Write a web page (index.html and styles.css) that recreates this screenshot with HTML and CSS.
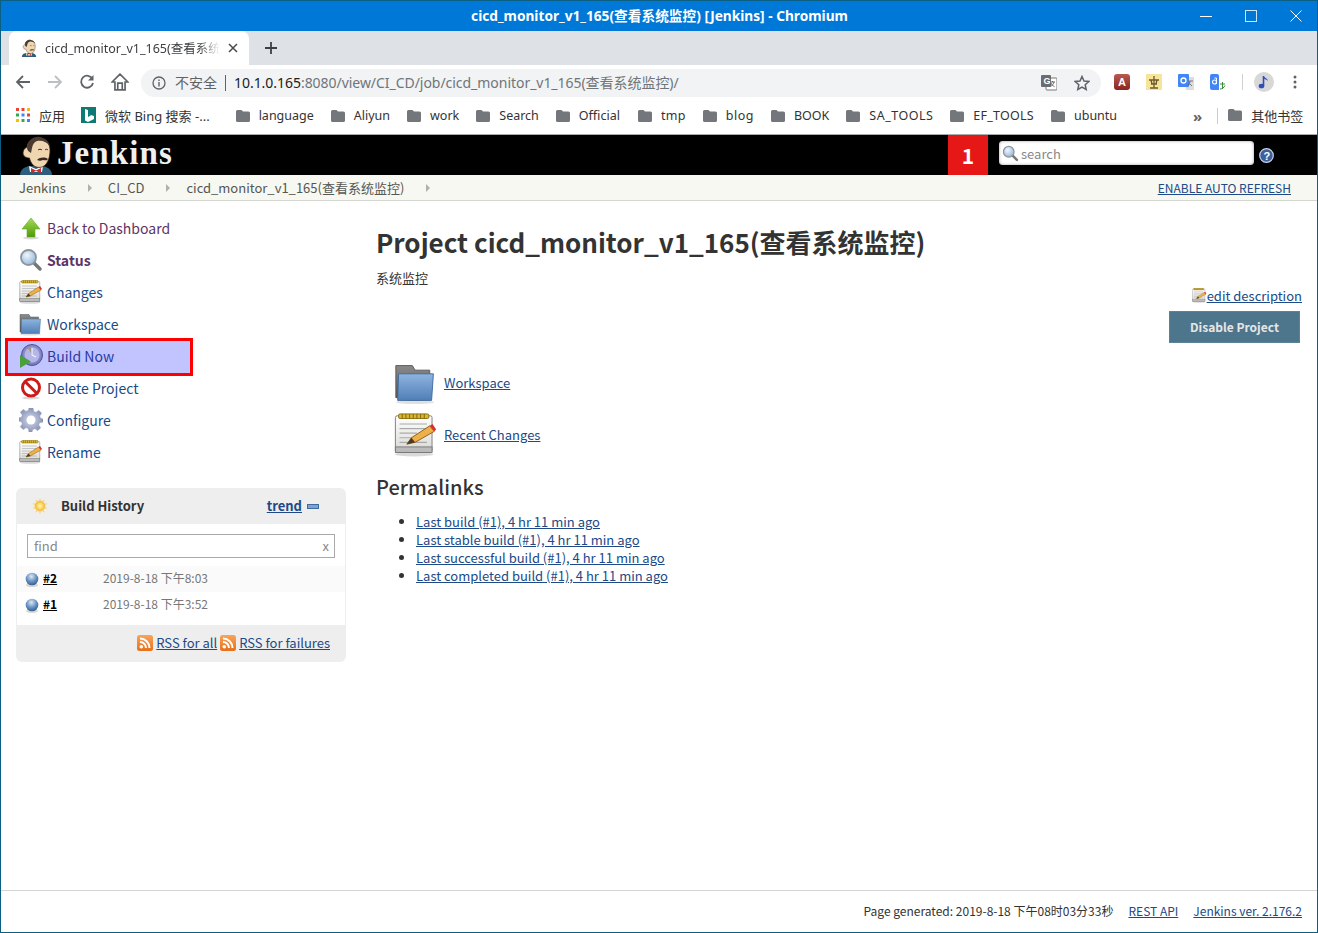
FILE: index.html
```html
<!DOCTYPE html>
<html>
	<head>
		<meta charset="UTF-8">
		<title>cicd_monitor_v1_165(查看系统监控) [Jenkins]</title>
		<link rel="stylesheet" href="styles.css">
	</head>
	<body>
		<svg class="defs" width="0" height="0">
			<defs>
				<linearGradient id="gFolder" x1="0" y1="0" x2="0" y2="1"><stop offset="0" stop-color="#8fb4de"/><stop offset="1" stop-color="#4f7fb8"/></linearGradient>
				<linearGradient id="gGrey" x1="0" y1="0" x2="0" y2="1"><stop offset="0" stop-color="#8a8a8a"/><stop offset="1" stop-color="#555"/></linearGradient>
				<linearGradient id="gPaper" x1="0" y1="0" x2="0" y2="1"><stop offset="0" stop-color="#fff"/><stop offset="1" stop-color="#d8d8d4"/></linearGradient>
				<linearGradient id="gArrow" x1="0" y1="0" x2="0" y2="1"><stop offset="0" stop-color="#a5dc5a"/><stop offset="1" stop-color="#4e9a06"/></linearGradient>
				<linearGradient id="gRss" x1="0" y1="0" x2="0" y2="1"><stop offset="0" stop-color="#f9a45a"/><stop offset="1" stop-color="#e8701a"/></linearGradient>
				<linearGradient id="gExtA" x1="0" y1="0" x2="0" y2="1"><stop offset="0" stop-color="#b85a52"/><stop offset="1" stop-color="#8a2420"/></linearGradient>
				<radialGradient id="gBall" cx=".45" cy=".3" r=".75"><stop offset="0" stop-color="#dfe8f3"/><stop offset=".5" stop-color="#6f97c8"/><stop offset="1" stop-color="#2b5688"/></radialGradient>
				<radialGradient id="gLens" cx=".4" cy=".35" r=".7"><stop offset="0" stop-color="#f0f6fc"/><stop offset="1" stop-color="#93b6dc"/></radialGradient>
				<radialGradient id="gSun" cx=".5" cy=".5" r=".5"><stop offset="0" stop-color="#fff6a8"/><stop offset="1" stop-color="#f9c440"/></radialGradient>
				<radialGradient id="gClock" cx=".5" cy=".45" r=".6"><stop offset="0" stop-color="#b9bbec"/><stop offset="1" stop-color="#6a6fb5"/></radialGradient>
				<radialGradient id="gGear" cx=".5" cy=".5" r=".5"><stop offset="0" stop-color="#d4d9ea"/><stop offset="1" stop-color="#8a95ba"/></radialGradient>

				<symbol id="i-folder" viewBox="0 0 48 48">
					<path d="M2 5h18l3 5h16v30H2z" fill="url(#gGrey)" stroke="#555"/>
					<path d="M5 14h38l-2 29H4z" fill="url(#gFolder)" stroke="#3c6a9e"/>
					<ellipse cx="23" cy="45" rx="21" ry="2" fill="#000" opacity=".12"/>
				</symbol>
				<symbol id="i-note" viewBox="0 0 48 48">
					<ellipse cx="22" cy="45" rx="21" ry="2.5" fill="#000" opacity=".15"/>
					<rect x="1.500" y="3" width="40" height="40" rx="2" fill="url(#gPaper)" stroke="#777"/>
					<rect x="1.500" y="37" width="40" height="6" fill="#bbb" stroke="#777"/>
					<rect x="5" y="1" width="33" height="5" rx="1.500" fill="#d8b62f" stroke="#8a6d0c"/>
					<path d="M9 1v5M13 1v5M17 1v5M21 1v5M25 1v5M29 1v5M33 1v5" stroke="#7d620a"/>
					<path d="M6 12h30M6 17h30M6 22h19M6 27h15M6 32h30" stroke="#aaa" stroke-width="1.200"/>
					<path d="M14 34l5-7 20-13 5 6-21 12z" fill="#edb04a" stroke="#8a5a12"/>
					<path d="M39 14l5 6 2-2-4-6z" fill="#d9302c"/>
					<path d="M14 34l5-7 4 5z" fill="#4a3a22"/>
				</symbol>
				<symbol id="i-up" viewBox="0 0 24 24">
					<ellipse cx="12" cy="22" rx="8" ry="1.500" fill="#000" opacity=".15"/>
					<path d="M12 2L21 13H16V21H8V13H3z" fill="url(#gArrow)" stroke="#6aa82a" stroke-width=".6"/>
				</symbol>
				<symbol id="i-search" viewBox="0 0 24 24">
					<path d="M14 14l7 7" stroke="#777" stroke-width="3.500" stroke-linecap="round"/>
					<circle cx="9.500" cy="9.500" r="7.500" fill="url(#gLens)" stroke="#8d959c" stroke-width="1.800"/>
				</symbol>
				<symbol id="i-clock" viewBox="0 0 24 24">
					<circle cx="13" cy="11" r="10.500" fill="url(#gClock)" stroke="#4e5296"/>
					<circle cx="13" cy="11" r="7.500" fill="#b4b6ea"/>
					<path d="M13 11L9 4a8 8 0 0 1 4-.5z" fill="#a8937a"/>
					<path d="M13 11V4M13 11l4 2" stroke="#f4f4ff" stroke-width="1.200"/>
					<path d="M1 11l11 6.500L1 24z" fill="#4aa03a"/>
				</symbol>
				<symbol id="i-delete" viewBox="0 0 24 24">
					<ellipse cx="12" cy="22" rx="9" ry="1.500" fill="#000" opacity=".15"/>
					<circle cx="12" cy="11.500" r="8.500" fill="#fff" stroke="#cc1b1b" stroke-width="3"/>
					<path d="M6 5.500l12 12" stroke="#cc1b1b" stroke-width="3"/>
				</symbol>
				<symbol id="i-gear" viewBox="0 0 24 24">
					<path d="M10 0h4l.6 3.400 2.300 1 2.900-2 2.800 2.800-2 2.900 1 2.300L24 11v3l-3.400.6-1 2.300 2 2.900-2.800 2.800-2.900-2-2.300 1L13 24h-3l-.6-3.400-2.300-1-2.900 2-2.800-2.800 2-2.900-1-2.300L-1 13v-3l3.400-.6 1-2.300-2-2.900L4.200 1.400l2.900 2 2.300-1z" fill="url(#gGear)" stroke="#8790a8" stroke-width=".5"/>
					<circle cx="12" cy="12" r="4.500" fill="#fff"/>
				</symbol>
				<symbol id="i-sun" viewBox="0 0 16 16">
					<path d="M8 0l1.500 3 3-1.500-.5 3.400 3.500.6L13 8l2.500 2.500-3.500.6.500 3.400-3-1.500L8 16l-1.500-3-3 1.500.5-3.400-3.500-.6L3 8 .5 5.500 4 4.900l-.5-3.400 3 1.500z" fill="#f7d88c"/>
					<circle cx="8" cy="8" r="4.500" fill="url(#gSun)" stroke="#eaa93a" stroke-width=".6"/>
				</symbol>
				<symbol id="i-ball" viewBox="0 0 16 16">
					<ellipse cx="8" cy="14" rx="6" ry="2" fill="#000" opacity=".15"/>
					<circle cx="8" cy="8" r="6.300" fill="url(#gBall)"/>
				</symbol>
				<symbol id="i-rss" viewBox="0 0 16 16">
					<rect width="16" height="16" rx="2.500" fill="url(#gRss)"/>
					<circle cx="4.300" cy="11.700" r="1.800" fill="#fff"/>
					<path d="M3 7a6 6 0 0 1 6 6M3 3.500A9.500 9.500 0 0 1 12.500 13" fill="none" stroke="#fff" stroke-width="2"/>
				</symbol>
				<symbol id="i-bm" viewBox="0 0 14 12">
					<path d="M1.500 0H5.500L7 1.500H12.500A1.500 1.500 0 0 1 14 3V10.500A1.500 1.500 0 0 1 12.500 12H1.500A1.500 1.500 0 0 1 0 10.500V1.500A1.500 1.500 0 0 1 1.500 0Z" fill="#73767a"/>
				</symbol>
				<symbol id="i-butler" viewBox="0 0 34 40">
					<path d="M1 40c0-5 4-8 9-9h14c5 1 9 4 9 9z" fill="#2f5d7c"/>
					<path d="M10 31l7 3 7-3-1 6H11z" fill="#fff"/>
					<path d="M12 33l5 2.500 5-2.500v5l-5-2-5 2z" fill="#cc2b2b"/>
					<path d="M8 12C9 5 15 2 21 3c6 1 10 6 10 12 0 7-2 13-6 16-3 2-8 2-11-1-2-2-3-5-3.500-7C7 23 4 21 4 18s2-5 4-6z" fill="#f0d6b0" stroke="#3a2a20" stroke-width=".8"/>
					<path d="M8 13C8 5 15 1 21 2c5 1 9 4 10 9-3-4-8-6-13-5-3 1-4 3-5 7l-1 5c-2-1-4-3-4-5z" fill="#4a3a32"/>
					<path d="M19 15c1-1 3-1 4 0M26 15c1-1 2-1 3 0" stroke="#3a2a20" fill="none"/>
					<path d="M18 25c3-3 8-3 11-1-1 2-3 1-5 1-2 1-4 1-6 0z" fill="#3a2a20"/>
				</symbol>
			</defs>
		</svg>

		<div class="titlebar">
			<span></span>
			<span class="win-title">cicd_monitor_v1_165(查看系统监控) [Jenkins] - Chromium</span>
			<div class="win-btns">
				<svg width="12" height="12" viewBox="0 0 12 12"><path d="M0 6.500h12" stroke="#fff"/></svg>
				<svg width="12" height="12" viewBox="0 0 12 12"><rect x=".5" y=".5" width="11" height="11" fill="none" stroke="#cfe6f8"/></svg>
				<svg width="12" height="12" viewBox="0 0 12 12"><path d="M.5.500l11 11M11.500.500l-11 11" stroke="#fff"/></svg>
			</div>
		</div>

		<div class="tabstrip">
			<div class="tab">
				<svg class="tab-icon" width="16" height="18"><use href="#i-butler"/></svg>
				<span class="tab-text">cicd_monitor_v1_165(查看系统监控)</span>
				<svg class="tab-x" width="10" height="10" viewBox="0 0 10 10"><path d="M1 1l8 8M9 1l-8 8" stroke="#45494e" stroke-width="1.500"/></svg>
			</div>
			<svg class="tab-new" width="12" height="12" viewBox="0 0 12 12"><path d="M6 0v12M0 6h12" stroke="#3c4043" stroke-width="1.800"/></svg>
		</div>

		<div class="toolbar">
			<div class="nav-btns">
				<svg width="16" height="16" viewBox="0 0 16 16"><path d="M15 8H2M8 2L2 8l6 6" fill="none" stroke="#5f6368" stroke-width="1.800"/></svg>
				<svg width="16" height="16" viewBox="0 0 16 16"><path d="M1 8h13M8 2l6 6-6 6" fill="none" stroke="#bcbfc3" stroke-width="1.800"/></svg>
				<svg width="16" height="16" viewBox="0 0 16 16"><path d="M13.500 5A6 6 0 1 0 14 9" fill="none" stroke="#5f6368" stroke-width="1.800"/><path d="M14.500 1v5.500H9z" fill="#5f6368"/></svg>
				<svg width="18" height="18" viewBox="0 0 16 16"><path d="M8 1L1 8h2.500v7h9V8H15zM6 15V9h4v6" fill="none" stroke="#5f6368" stroke-width="1.500"/></svg>
			</div>
			<div class="urlbar">
				<svg class="url-info" width="14" height="14" viewBox="0 0 14 14"><circle cx="7" cy="7" r="6" fill="none" stroke="#5f6368" stroke-width="1.300"/><path d="M7 6v4.500M7 3.500v1.500" stroke="#5f6368" stroke-width="1.400"/></svg>
				<span class="url-warn">不安全</span>
				<span class="url-sep"></span>
				<span class="url-text"><b>10.1.0.165</b>:8080/view/CI_CD/job/cicd_monitor_v1_165(查看系统监控)/</span>
				<svg class="url-trans" width="16" height="16" viewBox="0 0 16 16"><rect x="5" y="3" width="11" height="12" rx="1" fill="#fff" stroke="#777"/><rect width="10" height="12" rx="1" fill="#6a6d70"/><text class="ico-t" x="2.500" y="9">G</text><path d="M9 7h5M11.500 6v1M13 7c-.5 2-2 4-3.500 4.500M10 8c.5 1.500 2 3 3.500 3.500" stroke="#666" fill="none"/></svg>
				<svg class="url-star" width="16" height="16" viewBox="0 0 16 16"><path d="M8 1.500l2 4.500 4.800.5-3.600 3.200 1 4.800L8 12.100l-4.200 2.400 1-4.800L1.200 6.500 6 6z" fill="none" stroke="#5f6368" stroke-width="1.500"/></svg>
			</div>
			<div class="ext-btns">
				<svg width="16" height="16" viewBox="0 0 16 16"><rect width="16" height="16" rx="3" fill="url(#gExtA)"/><text class="ico-a" x="4" y="12">A</text></svg>
				<svg width="16" height="16" viewBox="0 0 16 16"><rect width="16" height="16" fill="#f8e39a"/><path d="M8 2v12M3 6h10M4 14h8M5 10h6M5 6l1 4M11 6l-1 4" stroke="#6b5a2a" stroke-width="1.300" fill="none"/></svg>
				<svg width="16" height="16" viewBox="0 0 16 16"><path d="M6 3h10v13H8z" fill="#ddd"/><rect width="11" height="13" rx="1" fill="#4285f4"/><circle cx="5.500" cy="6.500" r="2.500" fill="none" stroke="#fff" stroke-width="1.300"/><path d="M10 7h5M12 7c0 2-1 4-2 5M11 9l3 3" stroke="#777"/></svg>
				<svg width="16" height="16" viewBox="0 0 16 16"><path d="M2 0h5a2 2 0 0 1 2 2v14H2a2 2 0 0 1-2-2V2a2 2 0 0 1 2-2z" fill="#4285f4"/><circle cx="4.500" cy="8" r="2" fill="none" stroke="#fff" stroke-width="1.200"/><path d="M4.500 4h2v6" stroke="#fff" fill="none"/><path d="M10 10h5M12.500 8v7M10 15c1.500 0 4-1 5-3.500" stroke="#3f8a3a" fill="none"/></svg>
				<span class="ext-sep"></span>
				<svg class="ext-avatar" width="20" height="20" viewBox="0 0 20 20"><circle cx="10" cy="10" r="10" fill="#d8d8d8"/><path d="M9.500 4v9.500" stroke="#2d4fb8" stroke-width="1.600"/><ellipse cx="7.500" cy="14" rx="2.800" ry="2.300" fill="#2d4fb8"/><path d="M9.500 4c1 2 4 2 4.500 5-1.500-1.500-3-2-4.500-2z" fill="#2d4fb8"/></svg>
				<svg class="ext-menu" width="4" height="14" viewBox="0 0 4 14"><circle cx="2" cy="2" r="1.500" fill="#5f6368"/><circle cx="2" cy="7" r="1.500" fill="#5f6368"/><circle cx="2" cy="12" r="1.500" fill="#5f6368"/></svg>
			</div>
		</div>

		<div class="bookmarks">
			<span class="bm bm-cjk">
				<svg width="14" height="14" viewBox="0 0 14 14"><path d="M0 0h3v3H0z" fill="#e94335"/><path d="M5.500 0h3v3h-3z" fill="#e94335"/><path d="M11 0h3v3h-3z" fill="#fbbc05"/><path d="M0 5.500h3v3H0z" fill="#34a853"/><path d="M5.500 5.500h3v3h-3z" fill="#4285f4"/><path d="M11 5.500h3v3h-3z" fill="#ea4335"/><path d="M0 11h3v3H0z" fill="#fbbc05"/><path d="M5.500 11h3v3h-3z" fill="#34a853"/><path d="M11 11h3v3h-3z" fill="#4285f4"/></svg>
				应用
			</span>
			<span class="bm bm-cjk bm-bing">
				<svg width="15" height="16" viewBox="0 0 15 16"><rect width="15" height="16" fill="#0e7a74"/><path d="M4 2l3 1v7l3-1.500-2-1 5 1.500v3l-6 3-3-1.500z" fill="#fff"/></svg>
				微软 Bing 搜索 -...
			</span>
			<span class="bm"><svg width="14" height="12"><use href="#i-bm"/></svg>language</span>
			<span class="bm"><svg width="14" height="12"><use href="#i-bm"/></svg>Aliyun</span>
			<span class="bm"><svg width="14" height="12"><use href="#i-bm"/></svg>work</span>
			<span class="bm"><svg width="14" height="12"><use href="#i-bm"/></svg>Search</span>
			<span class="bm"><svg width="14" height="12"><use href="#i-bm"/></svg>Official</span>
			<span class="bm bm-tmp"><svg width="14" height="12"><use href="#i-bm"/></svg>tmp</span>
			<span class="bm bm-blog"><svg width="14" height="12"><use href="#i-bm"/></svg>blog</span>
			<span class="bm"><svg width="14" height="12"><use href="#i-bm"/></svg>BOOK</span>
			<span class="bm bm-sa"><svg width="14" height="12"><use href="#i-bm"/></svg>SA_TOOLS</span>
			<span class="bm bm-ef"><svg width="14" height="12"><use href="#i-bm"/></svg>EF_TOOLS</span>
			<span class="bm"><svg width="14" height="12"><use href="#i-bm"/></svg>ubuntu</span>
			<span class="bm-more">»</span>
			<span class="bm-sep"></span>
			<span class="bm bm-cjk"><svg width="14" height="12"><use href="#i-bm"/></svg>其他书签</span>
		</div>

		<div class="jk-head">
			<svg class="jk-butler" width="34" height="40"><use href="#i-butler"/></svg>
			<span class="jk-logo">Jenkins</span>
			<span class="jk-badge">1</span>
			<div class="jk-search">
				<svg width="17" height="17"><use href="#i-search"/></svg>
				<span>search</span>
			</div>
			<svg class="jk-help" width="15" height="15" viewBox="0 0 15 15"><circle cx="7.500" cy="7.500" r="6.800" fill="#3c5f9e" stroke="#c9d6ea" stroke-width="1.200"/><text class="ico-h" x="4.500" y="11.500">?</text></svg>
		</div>

		<div class="crumbs">
			<span>Jenkins</span><i class="arr"></i>
			<span>CI_CD</span><i class="arr"></i>
			<span>cicd_monitor_v1_165(查看系统监控)</span><i class="arr"></i>
			<a href="#" class="auto-refresh">ENABLE AUTO REFRESH</a>
		</div>

		<div class="page">
			<div class="side">
				<div class="tasks">
					<div class="task task-visited"><svg width="24" height="24"><use href="#i-up"/></svg>Back to Dashboard</div>
					<div class="task task-cur"><svg width="24" height="24"><use href="#i-search"/></svg>Status</div>
					<div class="task"><svg width="24" height="24"><use href="#i-note"/></svg>Changes</div>
					<div class="task"><svg width="24" height="24"><use href="#i-folder"/></svg>Workspace</div>
					<div class="task task-hl"><svg width="24" height="24"><use href="#i-clock"/></svg>Build Now</div>
					<div class="task"><svg width="24" height="24"><use href="#i-delete"/></svg>Delete Project</div>
					<div class="task"><svg width="24" height="24"><use href="#i-gear"/></svg>Configure</div>
					<div class="task"><svg width="24" height="24"><use href="#i-note"/></svg>Rename</div>
				</div>

				<div class="history">
					<div class="hist-head">
						<svg width="16" height="16"><use href="#i-sun"/></svg>
						<span class="hist-title">Build History</span>
						<a href="#" class="hist-trend">trend</a>
						<span class="hist-dash"></span>
					</div>
					<div class="hist-body">
						<div class="hist-find"><span>find</span><span class="hist-x">x</span></div>
						<div class="hist-row hist-row-odd">
							<svg width="16" height="16"><use href="#i-ball"/></svg>
							<a href="#">#2</a><span class="hist-date">2019-8-18 下午8:03</span>
						</div>
						<div class="hist-row">
							<svg width="16" height="16"><use href="#i-ball"/></svg>
							<a href="#">#1</a><span class="hist-date">2019-8-18 下午3:52</span>
						</div>
					</div>
					<div class="hist-foot">
						<svg width="16" height="16"><use href="#i-rss"/></svg><a href="#">RSS for all</a>
						<svg width="16" height="16"><use href="#i-rss"/></svg><a href="#">RSS for failures</a>
					</div>
				</div>
			</div>

			<div class="main">
				<h1>Project cicd_monitor_v1_165(查看系统监控)</h1>
				<p class="desc">系统监控</p>
				<div class="edit-row">
					<svg width="15" height="15"><use href="#i-note"/></svg><a href="#">edit description</a>
				</div>
				<div class="btn-row"><span class="btn">Disable Project</span></div>
				<div class="links">
					<div class="link-row"><svg width="44" height="44"><use href="#i-folder"/></svg><a href="#">Workspace</a></div>
					<div class="link-row"><svg width="44" height="44"><use href="#i-note"/></svg><a href="#">Recent Changes</a></div>
				</div>
				<h2>Permalinks</h2>
				<ul class="perma">
					<li><a href="#">Last build (#1), 4 hr 11 min ago</a></li>
					<li><a href="#">Last stable build (#1), 4 hr 11 min ago</a></li>
					<li><a href="#">Last successful build (#1), 4 hr 11 min ago</a></li>
					<li><a href="#">Last completed build (#1), 4 hr 11 min ago</a></li>
				</ul>
			</div>
		</div>

		<div class="foot">
			<span>Page generated: 2019-8-18 下午08时03分33秒</span>
			<a href="#">REST API</a>
			<a href="#">Jenkins ver. 2.176.2</a>
		</div>
	</body>
</html>
```

FILE: styles.css
```css
*{
	box-sizing: border-box;
}
html,body{
	margin: 0;
	padding: 0;
}
body{
	width: 1318px;
	height: 933px;
	border: 1px solid #0b5f80;
	background: #fff;
	display: flex;
	flex-direction: column;
	overflow: hidden;
	font-family: "Noto Sans CJK SC", sans-serif;
	color: #333;
}
a{
	color: #204a87;
}
svg{
	flex: none;
}
.defs{
	display: block;
	overflow: hidden;
}
.ico-t,.ico-a,.ico-h{
	font-family: "Liberation Sans", sans-serif;
	font-weight: bold;
	fill: #fff;
	font-size: 9px;
}
.ico-a{
	font-size: 11px;
}
.ico-h{
	font-size: 11px;
}

/* window title */
.titlebar{
	height: 30px;
	flex: none;
	background: #0078d7;
	color: #fff;
	display: grid;
	grid-template-columns: 1fr auto 1fr;
	align-items: center;
}
.win-title{
	font: bold 13.700px "Noto Sans", "Noto Sans CJK SC", sans-serif;
	padding: 0 0 3px 1px;
	white-space: nowrap;
}
.win-btns{
	justify-self: end;
	display: flex;
	gap: 33px;
	padding-right: 15px;
}

/* tabs */
.tabstrip{
	height: 34px;
	flex: none;
	background: #dee1e6;
	display: flex;
	align-items: flex-end;
	padding-left: 8px;
}
.tab{
	width: 240px;
	height: 34px;
	background: #fff;
	border-radius: 8px 8px 0 0;
	display: flex;
	align-items: center;
	padding: 0 11px 0 12px;
}
.tab-icon{
	margin-right: 8px;
}
.tab-text{
	font: 12.500px "Noto Sans", "Noto Sans CJK SC", sans-serif;
	color: #3c4043;
	white-space: nowrap;
	overflow: hidden;
	flex: 1;
	padding-bottom: 2px;
	-webkit-mask-image: linear-gradient(to right, #000 88%, transparent);
}
.tab-x{
	margin-left: 8px;
}
.tab-new{
	margin: 0 0 11px 16px;
}

/* toolbar */
.toolbar{
	height: 33px;
	flex: none;
	display: flex;
	align-items: center;
	background: #fff;
}
.nav-btns{
	display: flex;
	align-items: center;
	gap: 16px;
	padding-left: 14px;
	width: 140px;
}
.urlbar{
	width: 960px;
	height: 28px;
	margin-top: 3px;
	background: #f1f3f4;
	border-radius: 14px;
	display: flex;
	align-items: center;
	padding-left: 11px;
	font: 14px "Noto Sans", "Noto Sans CJK SC", sans-serif;
}
.url-warn{
	margin-left: 9px;
	color: #5f6368;
	padding-bottom: 2px;
}
.url-sep{
	width: 1px;
	height: 16px;
	background: #5f6368;
	margin: 0 8px 0 8px;
}
.url-text{
	color: #70757a;
	flex: 1;
	white-space: nowrap;
	font-size: 14px;
	padding-bottom: 2px;
	letter-spacing: -.04px;
}
.url-text b{
	font-weight: normal;
	color: #202124;
}
.url-star{
	margin: 0 11px 0 17px;
}
.ext-btns{
	display: flex;
	align-items: center;
	gap: 16px;
	padding-left: 13px;
	margin-top: 1px;
}
.ext-sep{
	width: 1px;
	height: 16px;
	background: #d0d0d0;
	margin: 0 -1px 0 0;
}
.ext-avatar{
	margin-left: -4px;
}
.ext-menu{
	margin-left: 3px;
}

/* bookmarks */
.bookmarks{
	height: 37px;
	flex: none;
	background: #fff;
	border-bottom: 1px solid #aaa;
	display: flex;
	align-items: center;
	gap: 17px;
	padding: 0 0 1px 15px;
	font: 12.500px "Noto Sans", "Noto Sans CJK SC", sans-serif;
	color: #333;
	white-space: nowrap;
}
.bm{
	display: flex;
	align-items: center;
	gap: 9px;
}
.bm-cjk{
	font-size: 13px;
	padding-bottom: 1px;
}
.bm-bing{
	margin: 0 9px 0 -1px;
}
.bm-tmp{
	margin-left: 1px;
	letter-spacing: .3px;
}
.bm-blog{
	letter-spacing: .5px;
}
.bm-sa{
	letter-spacing: .5px;
}
.bm-ef{
	letter-spacing: .25px;
}
.bm-more{
	margin-left: 59px;
	color: #5f6368;
	font-size: 15px;
	font-weight: bold;
}
.bm-sep{
	width: 1px;
	height: 16px;
	background: #ccc;
	margin: 0 -7px 0 -2px;
}

/* jenkins head */
.jk-head{
	height: 40px;
	flex: none;
	background: #000;
	display: flex;
	align-items: center;
	padding-left: 18px;
}
.jk-logo{
	font: bold 33px "Liberation Serif", serif;
	color: #f0f0f0;
	letter-spacing: 1.100px;
	margin-left: 4px;
	padding-bottom: 4px;
	width: 891px;
}
.jk-badge{
	width: 40px;
	height: 40px;
	background: #e51717;
	color: #fff;
	font-weight: bold;
	font-size: 21px;
	display: flex;
	align-items: center;
	justify-content: center;
}
.jk-search{
	width: 255px;
	height: 24px;
	margin: 0 0 4px 11px;
	background: #fff;
	border-radius: 4px;
	box-shadow: inset 0 0 3px #999;
	display: flex;
	align-items: center;
	gap: 2px;
	padding-left: 3px;
	font-size: 13px;
	color: #888;
}
.jk-help{
	margin-left: 5px;
}

/* breadcrumb */
.crumbs{
	height: 26px;
	flex: none;
	background: #f6f8f1;
	border-bottom: 1px solid #d3d7cf;
	display: flex;
	align-items: center;
	padding: 0 26px 0 18px;
	font-size: 13px;
	color: #555753;
}
.arr{
	width: 0;
	height: 0;
	border-left: 4px solid #b0b0b0;
	border-top: 4px solid transparent;
	border-bottom: 4px solid transparent;
	margin: 0 16px 0 22px;
}
.auto-refresh{
	margin-left: auto;
	font-size: 12px;
}

/* layout */
.page{
	flex: 1;
	display: flex;
	min-height: 0;
}
.side{
	width: 375px;
	flex: none;
	padding-top: 12px;
}
.tasks{
	width: 188px;
	margin-left: 4px;
}
.task{
	height: 32px;
	display: flex;
	align-items: center;
	gap: 4px;
	padding: 0 0 2px 14px;
	font-size: 14px;
	color: #204a87;
}
.task-visited{
	color: #5c3566;
}
.task-cur{
	color: #5c3566;
	font-weight: bold;
}
.task-hl{
	height: 38px;
	margin: -3px 0;
	padding-left: 11px;
	border: 3px solid #f00;
	background: #c2c4ff;
	color: #2b3aa0;
}

/* build history */
.history{
	width: 330px;
	margin: 19px 0 0 15px;
	background: #eee;
	border-radius: 6px;
	overflow: hidden;
}
.hist-head{
	height: 36px;
	display: flex;
	align-items: center;
	padding: 0 0 1px 16px;
	font-size: 13px;
	font-weight: bold;
}
.hist-title{
	margin-left: 13px;
	color: #333;
}
.hist-trend{
	margin-left: auto;
}
.hist-dash{
	width: 12px;
	height: 5px;
	margin: 1px 27px 0 5px;
	background: #7ea3cf;
	border: 1px solid #3f6ba0;
}
.hist-body{
	background: #fff;
	margin: 0 1px;
	padding-top: 10px;
	padding-bottom: 7px;
}
.hist-find{
	width: 308px;
	height: 24px;
	margin: 0 0 8px 10px;
	border: 1px solid #aaa;
	display: flex;
	justify-content: space-between;
	align-items: center;
	padding: 0 5px 2px 6px;
	font-size: 13px;
	color: #888;
}
.hist-x{
	font-size: 13px;
}
.hist-row{
	height: 26px;
	display: flex;
	align-items: center;
	padding-left: 7px;
	font-size: 12px;
}
.hist-row a,.hist-date{
	padding-bottom: 3px;
}
.hist-row-odd{
	background: #fafafa;
}
.hist-row a{
	margin-left: 3px;
	width: 60px;
	color: #000;
	font-weight: bold;
}
.hist-date{
	color: #777;
}
.hist-foot{
	height: 37px;
	display: flex;
	align-items: center;
	justify-content: flex-end;
	gap: 3px;
	padding: 0 16px 2px 0;
	font-size: 13px;
}
.hist-foot a{
	padding-bottom: 1px;
}

/* main column */
.main{
	flex: 1;
	padding: 23px 15px 0 0;
}
h1{
	margin: 0;
	font-size: 26px;
	line-height: 36px;
	font-weight: bold;
	color: #333;
}
.desc{
	margin: 8px 0 0;
	font-size: 13px;
	line-height: 20px;
}
.edit-row{
	display: flex;
	justify-content: flex-end;
	align-items: center;
	height: 18px;
	margin-top: -2px;
	font-size: 13px;
}
.btn-row{
	display: flex;
	justify-content: flex-end;
	padding-right: 2px;
	margin-top: 7px;
}
.btn{
	width: 131px;
	height: 32px;
	padding-bottom: 2px;
	background: #4d758c;
	border: 1px solid #5d8297;
	color: #e6e6e6;
	font-size: 12px;
	font-weight: bold;
	display: flex;
	align-items: center;
	justify-content: center;
}
.links{
	margin-top: 16px;
	padding-left: 18px;
}
.link-row{
	height: 48px;
	margin-bottom: 4px;
	display: flex;
	align-items: center;
	gap: 6px;
	font-size: 13px;
	padding-bottom: 1px;
}
h2{
	margin: 13px 0 0;
	font-size: 20px;
	line-height: 30px;
	font-weight: 500;
	color: #333;
}
.perma{
	margin: 11px 0 0;
	padding: 0 0 0 40px;
	font-size: 13px;
	line-height: 18px;
}

/* footer */
.foot{
	height: 42px;
	flex: none;
	border-top: 1px solid #d3d7cf;
	display: flex;
	align-items: center;
	justify-content: flex-end;
	gap: 15px;
	padding: 0 15px 3px 0;
	font-size: 12px;
	color: #333;
}
```
